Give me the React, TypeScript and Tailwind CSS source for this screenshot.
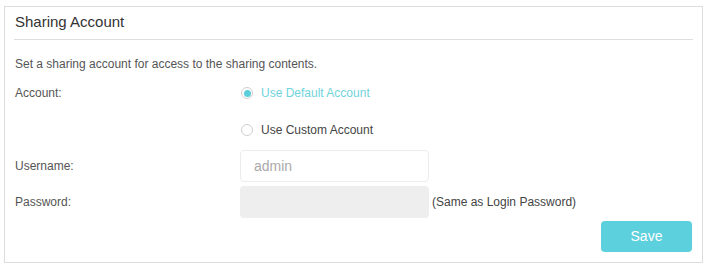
export default function App() {
  return (
    <div className="w-[710px] h-[268px] bg-white pt-[6px] pl-[4px] font-['Liberation_Sans',Arial,sans-serif]">
      <div className="w-[699px] h-[257px] border border-[#dcdcdc] px-[9px] relative">
        <div className="h-[33px] border-b border-[#dedede] flex items-end pb-[8px] pl-[1px]">
          <h2 className="text-[15px] leading-[18px] text-[#333]">Sharing Account</h2>
        </div>
        <p className="mt-[17px] text-[12px] leading-[14px] text-[#555] pl-[1px]">
          Set a sharing account for access to the sharing contents.
        </p>
        <div className="flex mt-[9px] text-[12px] text-[#555]">
          <div className="w-[227px] pl-[1px] pt-[6px] leading-[14px]">Account:</div>
          <div className="flex flex-col gap-[22px]">
            <label className="flex items-center gap-[8px] h-[26px]">
              <span className="w-[12px] h-[12px] rounded-full border border-[#cfcfcf] flex items-center justify-center">
                <span className="w-[7px] h-[7px] rounded-full bg-[#5bcfd9]" />
              </span>
              <span className="text-[#6fd3dc]">Use Default Account</span>
            </label>
            <label className="flex items-center gap-[8px] h-[26px] -mt-[11px]">
              <span className="w-[12px] h-[12px] rounded-full border border-[#cfcfcf]" />
              <span className="text-[#444]">Use Custom Account</span>
            </label>
          </div>
        </div>
        <div className="flex items-center mt-[7px] text-[12px] text-[#555]">
          <div className="w-[226px] pl-[1px]">Username:</div>
          <div className="w-[189px] h-[32px] rounded-[4px] border border-[#ececec] flex items-center px-[13px] text-[14px] text-[#aaa]">
            admin
          </div>
        </div>
        <div className="flex items-center mt-[4px] text-[12px] text-[#555]">
          <div className="w-[226px] pl-[1px]">Password:</div>
          <div className="w-[189px] h-[32px] rounded-[4px] bg-[#eeeeee]" />
          <span className="ml-[3px] text-[#444]">(Same as Login Password)</span>
        </div>
        <div className="flex justify-end mt-[3px] pr-[1px]">
          <button className="w-[91px] h-[31px] rounded-[4px] bg-[#5dd0dd] text-white text-[14px]">Save</button>
        </div>
      </div>
    </div>
  );
}
